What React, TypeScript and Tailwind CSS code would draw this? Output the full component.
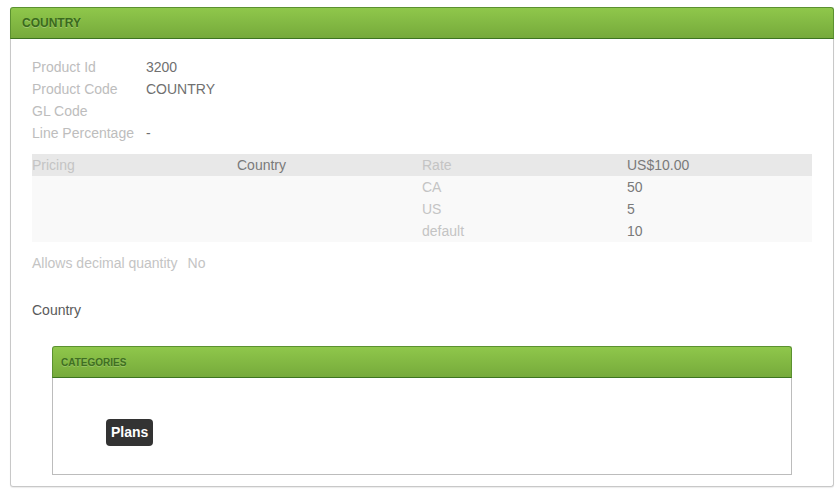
const details = [
  { label: 'Product Id', value: '3200' },
  { label: 'Product Code', value: 'COUNTRY' },
  { label: 'GL Code', value: '' },
  { label: 'Line Percentage', value: '-' },
];

const tiers = [
  { name: 'CA', value: '50' },
  { name: 'US', value: '5' },
  { name: 'default', value: '10' },
];

export default function App() {
  return (
    <div
      className="min-h-[493px] bg-white pt-[7px] pl-[10px]"
      style={{ fontFamily: '"Liberation Sans", Arial, sans-serif' }}
    >
      <div className="w-[824px] rounded-[3px] shadow-[0_1px_1px_rgba(0,0,0,0.08)]">
        {/* Header */}
        <div className="h-[32px] flex items-center pl-[11px] rounded-t-[3px] border border-[#5b9130] border-b-[#3d7420] bg-gradient-to-b from-[#8fc74b] to-[#76aa3b]">
          <span className="text-[12px] font-bold text-[#3a6a1d] [text-shadow:0_1px_0_rgba(255,255,255,0.25)]">
            COUNTRY
          </span>
        </div>

        {/* Body */}
        <div className="border border-t-0 border-[#c8c8c8] rounded-b-[3px] pt-[17px] pb-[11px] px-[21px] text-[14px]">
          <div className="flex flex-col">
            {details.map((d) => (
              <div key={d.label} className="flex h-[22px] items-center">
                <span className="w-[114px] text-[#bdbdbd]">{d.label}</span>
                <span className="text-[#707070]">{d.value}</span>
              </div>
            ))}
          </div>

          {/* Pricing table */}
          <div className="mt-[10px] w-[780px]">
            <div className="grid grid-cols-[205px_185px_205px_185px] h-[22px] items-center bg-[#e8e8e8]">
              <span className="text-[#c4c4c4]">Pricing</span>
              <span className="text-[#7a7a7a]">Country</span>
              <span className="text-[#c4c4c4]">Rate</span>
              <span className="text-[#7a7a7a]">US$10.00</span>
            </div>
            <div className="bg-[#f9f9f9]">
              {tiers.map((t) => (
                <div
                  key={t.name}
                  className="grid grid-cols-[205px_185px_205px_185px] h-[22px] items-center"
                >
                  <span />
                  <span />
                  <span className="text-[#c4c4c4]">{t.name}</span>
                  <span className="text-[#7a7a7a]">{t.value}</span>
                </div>
              ))}
            </div>
          </div>

          <div className="mt-[10px] h-[22px] flex items-center">
            <span className="text-[#c4c4c4]">Allows decimal quantity</span>
            <span className="ml-[10px] text-[#c4c4c4]">No</span>
          </div>

          <div className="mt-[25px] h-[22px] flex items-center text-[#5a5a5a]">Country</div>

          {/* Categories panel */}
          <div className="mt-[25px] mx-[20px] rounded-t-[3px]">
            <div className="h-[32px] flex items-center pl-[8px] rounded-t-[3px] border border-[#5b9130] border-b-[#3d7420] bg-gradient-to-b from-[#8fc74b] to-[#76aa3b]">
              <span className="text-[10px] font-bold text-[#3f6f22] [text-shadow:0_1px_0_rgba(255,255,255,0.2)]">
                CATEGORIES
              </span>
            </div>
            <div className="h-[97px] border border-t-0 border-[#bcbcbc] pt-[41px] pl-[53px]">
              <span className="inline-flex h-[27px] items-center px-[5px] rounded-[4px] bg-[#333333] text-white text-[14px] font-bold">
                Plans
              </span>
            </div>
          </div>
        </div>
      </div>
    </div>
  );
}
